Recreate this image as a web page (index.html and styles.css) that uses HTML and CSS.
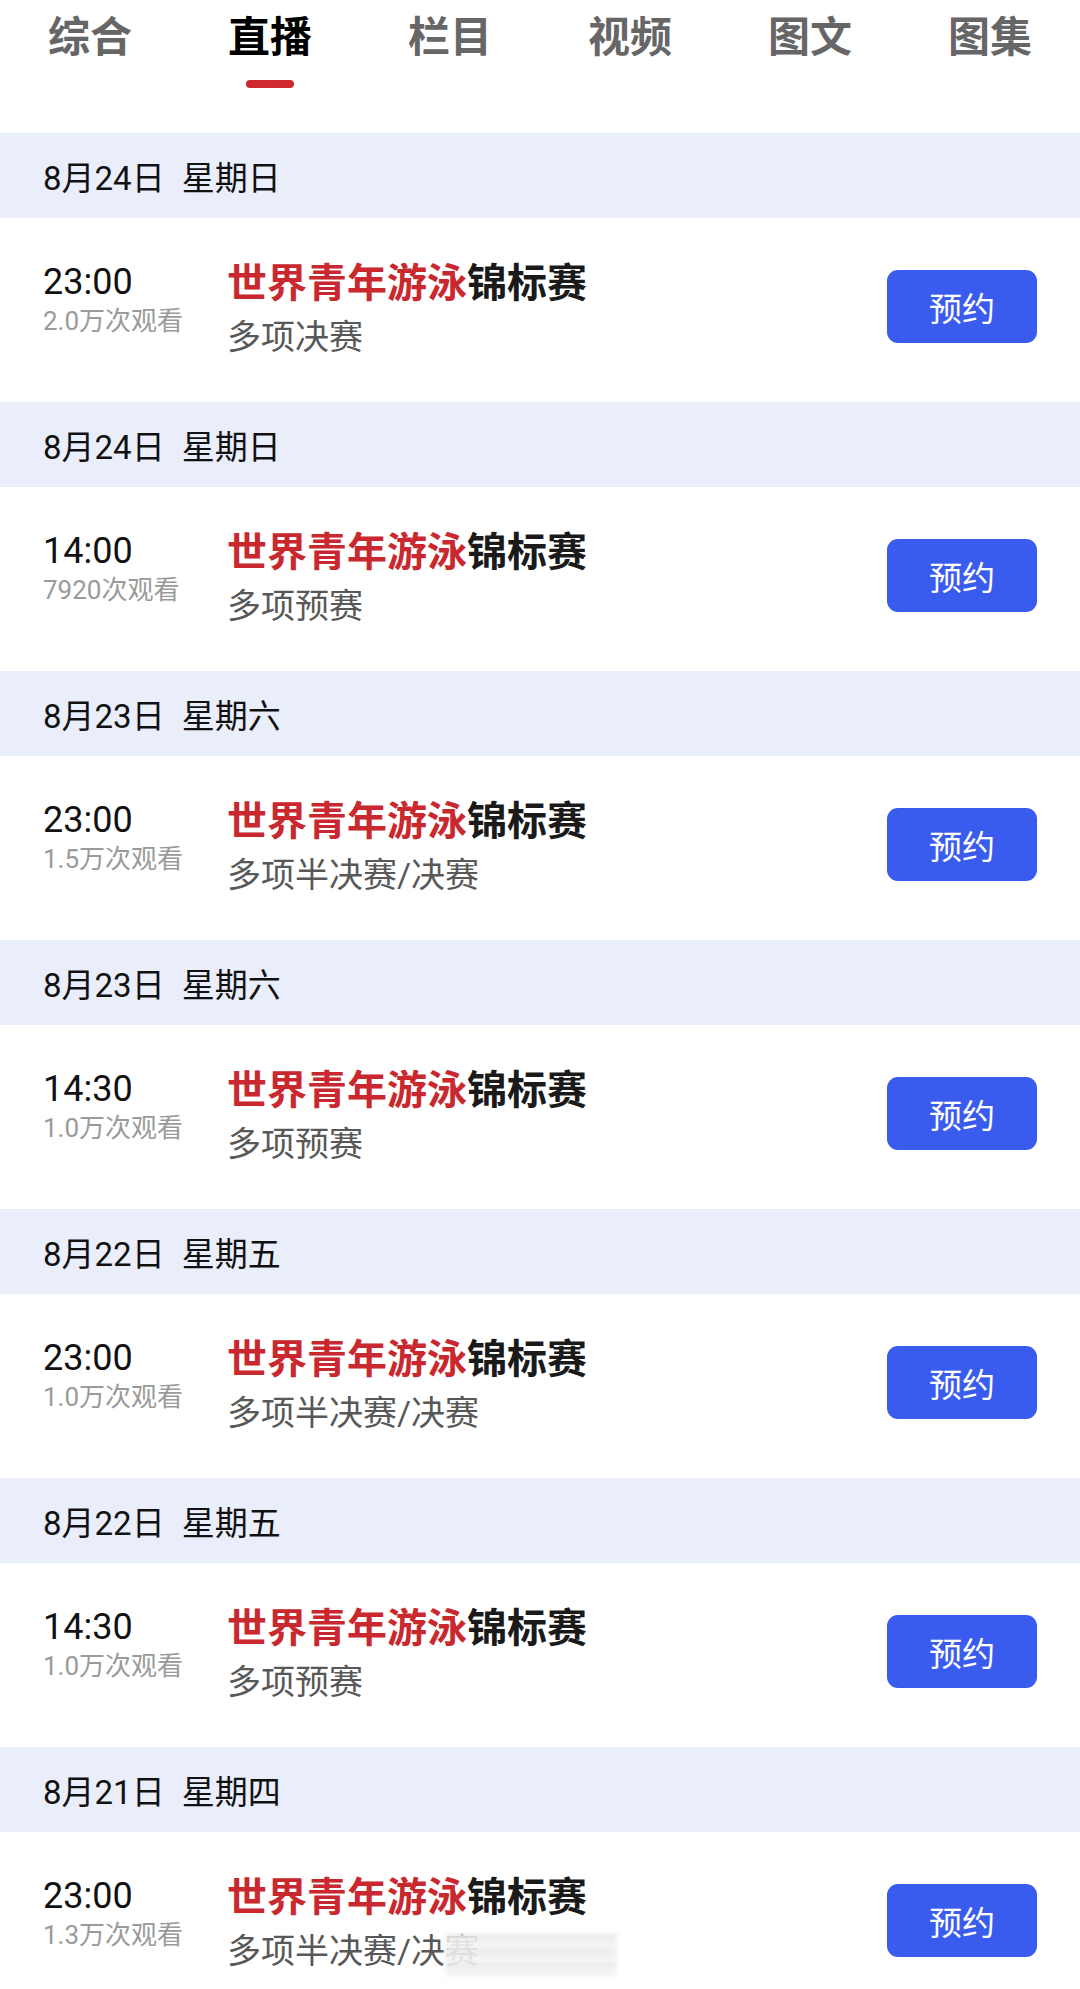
FILE: index.html
```html
<!DOCTYPE html>
<html lang="zh-CN">
<head>
    <meta charset="UTF-8">
    <meta name="viewport" content="width=device-width, initial-scale=1.0">
    <title>直播</title>
    <link rel="stylesheet" href="styles.css">
</head>
<body>
    <div class="tabs">
        <div class="tab">综合</div>
        <div class="tab active">直播</div>
        <div class="tab">栏目</div>
        <div class="tab">视频</div>
        <div class="tab">图文</div>
        <div class="tab">图集</div>
    </div>

    <div class="list">
        <div class="day">8月24日 星期日</div>
        <div class="item">
            <div class="when">
                <div class="time">23:00</div>
                <div class="views">2.0万次观看</div>
            </div>
            <div class="info">
                <div class="title"><span class="hl">世界青年游泳</span>锦标赛</div>
                <div class="sub">多项决赛</div>
            </div>
            <button class="book">预约</button>
        </div>

        <div class="day">8月24日 星期日</div>
        <div class="item">
            <div class="when">
                <div class="time">14:00</div>
                <div class="views">7920次观看</div>
            </div>
            <div class="info">
                <div class="title"><span class="hl">世界青年游泳</span>锦标赛</div>
                <div class="sub">多项预赛</div>
            </div>
            <button class="book">预约</button>
        </div>

        <div class="day">8月23日 星期六</div>
        <div class="item">
            <div class="when">
                <div class="time">23:00</div>
                <div class="views">1.5万次观看</div>
            </div>
            <div class="info">
                <div class="title"><span class="hl">世界青年游泳</span>锦标赛</div>
                <div class="sub">多项半决赛/决赛</div>
            </div>
            <button class="book">预约</button>
        </div>

        <div class="day">8月23日 星期六</div>
        <div class="item">
            <div class="when">
                <div class="time">14:30</div>
                <div class="views">1.0万次观看</div>
            </div>
            <div class="info">
                <div class="title"><span class="hl">世界青年游泳</span>锦标赛</div>
                <div class="sub">多项预赛</div>
            </div>
            <button class="book">预约</button>
        </div>

        <div class="day">8月22日 星期五</div>
        <div class="item">
            <div class="when">
                <div class="time">23:00</div>
                <div class="views">1.0万次观看</div>
            </div>
            <div class="info">
                <div class="title"><span class="hl">世界青年游泳</span>锦标赛</div>
                <div class="sub">多项半决赛/决赛</div>
            </div>
            <button class="book">预约</button>
        </div>

        <div class="day">8月22日 星期五</div>
        <div class="item">
            <div class="when">
                <div class="time">14:30</div>
                <div class="views">1.0万次观看</div>
            </div>
            <div class="info">
                <div class="title"><span class="hl">世界青年游泳</span>锦标赛</div>
                <div class="sub">多项预赛</div>
            </div>
            <button class="book">预约</button>
        </div>

        <div class="day">8月21日 星期四</div>
        <div class="item">
            <div class="when">
                <div class="time">23:00</div>
                <div class="views">1.3万次观看</div>
            </div>
            <div class="info">
                <div class="title"><span class="hl">世界青年游泳</span>锦标赛</div>
                <div class="sub">多项半决赛/决<span class="smudge">赛</span></div>
            </div>
            <button class="book">预约</button>
        </div>
    </div>
</body>
</html>
```

FILE: styles.css
```css
body {
    font-family: Roboto, "Noto Sans CJK SC", sans-serif;
    background-color: #fff;
    color: #111;
    margin: 0;
    padding: 0;
}

.tabs {
    display: grid;
    grid-template-columns: repeat(6, 1fr);
    height: 133px;
}

.tab {
    display: flex;
    flex-direction: column;
    align-items: center;
    padding-top: 16px;
    font-size: 42px;
    line-height: 44px;
    font-weight: bold;
    color: #666;
}

.tab.active {
    color: #000;
}

.tab.active:after {
    content: "";
    width: 48px;
    height: 8px;
    margin-top: 20px;
    border-radius: 4px;
    background-color: #d0282f;
}

.day {
    height: 85px;
    display: flex;
    align-items: center;
    padding-left: 43px;
    background-color: #eaeefb;
    font-size: 33px;
    word-spacing: 9px;
    color: #111;
}

.item {
    height: 184px;
    box-sizing: border-box;
    display: flex;
    align-items: flex-start;
    padding: 42px 43px 0 43px;
}

.when {
    width: 184px;
}

.time {
    font-size: 36px;
    line-height: 44px;
    color: #111;
}

.views {
    font-size: 26px;
    line-height: 34px;
    color: #9a9a9a;
}

.info {
    flex: 1;
}

.title {
    font-size: 40px;
    line-height: 48px;
    font-weight: bold;
    color: #1a1a1a;
}

.title .hl {
    color: #c9282e;
}

.sub {
    margin-top: 6px;
    font-size: 34px;
    line-height: 46px;
    color: #585858;
    white-space: nowrap;
}

.smudge {
    position: relative;
}

.smudge:after {
    content: "";
    position: absolute;
    left: 0;
    top: 2px;
    width: 172px;
    height: 44px;
    background: repeating-linear-gradient(180deg, #fafafa 0, #e4e4e4 4px, #f6f6f6 8px, #ececec 11px, #fdfdfd 14px);
    filter: blur(2px);
    opacity: 0.9;
}

.book {
    margin-top: 10px;
    width: 150px;
    height: 73px;
    border: 0;
    border-radius: 11px;
    background-color: #3a5cee;
    color: #fff;
    font-family: "Noto Sans CJK SC", sans-serif;
    font-size: 33px;
}
```
